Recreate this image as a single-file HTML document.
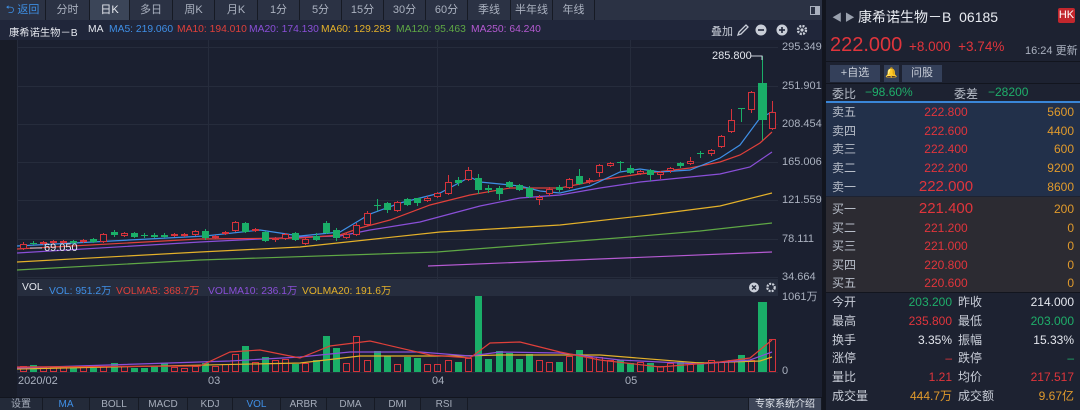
<!DOCTYPE html>
<html><head><meta charset="utf-8"><style>
*{margin:0;padding:0;box-sizing:border-box}
body{width:1080px;height:410px;overflow:hidden;background:#1b2030;font-family:"Liberation Sans","Noto Sans CJK SC",sans-serif;font-size:11px;color:#c9ced8;position:relative}
.a{position:absolute;white-space:nowrap}
.m{font-size:10.3px}
.tb{position:absolute;top:0;height:20px;background:#2b3244;border-right:1px solid #161a24;color:#aab1bf;font-size:11px;line-height:20px;text-align:center}
.bt{position:absolute;top:398px;height:12px;background:#232a39;border-right:1px solid #161a24;color:#a5acba;font-size:10px;line-height:14px;text-align:center;overflow:hidden}
.r{color:#e0353c}.g{color:#1fae6a}.o{color:#e09a2c}.w{color:#e4e7ee}
.row{position:absolute;left:826px;width:254px;height:18px;line-height:18px;font-size:12px}
.row .l{position:absolute;left:6px;color:#b8bec9}
.row .p{position:absolute;left:60px;width:120px;text-align:center}
.row .v{position:absolute;right:6px}
.st{position:absolute;left:826px;width:254px;height:19px;line-height:19px;font-size:12px}
.st span{position:absolute}
</style></head><body>
<div class="tb" style="left:0;width:46px;color:#3d8de0">⮌ 返回</div>
<div class="tb" style="left:46px;width:44px">分时</div>
<div class="tb" style="left:90px;width:40px;background:#3b4558;color:#e6e9ef">日K</div>
<div class="tb" style="left:130px;width:43px">多日</div>
<div class="tb" style="left:173px;width:42px">周K</div>
<div class="tb" style="left:215px;width:43px">月K</div>
<div class="tb" style="left:258px;width:42px">1分</div>
<div class="tb" style="left:300px;width:42px">5分</div>
<div class="tb" style="left:342px;width:42px">15分</div>
<div class="tb" style="left:384px;width:42px">30分</div>
<div class="tb" style="left:426px;width:42px">60分</div>
<div class="tb" style="left:468px;width:43px">季线</div>
<div class="tb" style="left:511px;width:42px">半年线</div>
<div class="tb" style="left:553px;width:42px">年线</div>
<div class="a" style="left:595px;top:0;width:227px;height:20px;background:#2b3244"></div>
<div class="a" style="left:810px;top:6px;width:10px;height:9px;border:1px solid #aab1bf"><div style="position:absolute;right:0;top:0;width:4px;height:7px;background:#aab1bf"></div></div>
<div class="a" style="left:0;top:20px;width:822px;height:20px;background:#20263a"></div>
<div class="a m" style="left:9px;top:24px;color:#e4e7ee">康希诺生物－B</div>
<div class="a m" style="left:88px;top:24px;color:#e4e7ee">MA</div>
<div class="a m" style="left:109px;top:24px;color:#3f8fe6">MA5: 219.060</div>
<div class="a m" style="left:177px;top:24px;color:#e0403a">MA10: 194.010</div>
<div class="a m" style="left:249px;top:24px;color:#8a4fd8">MA20: 174.130</div>
<div class="a m" style="left:321px;top:24px;color:#e4b12a">MA60: 129.283</div>
<div class="a m" style="left:396px;top:24px;color:#5fa845">MA120: 95.463</div>
<div class="a m" style="left:471px;top:24px;color:#b55ad2">MA250: 64.240</div>
<div class="a" style="left:711px;top:23px;color:#c9ced8">叠加</div>
<svg class="a" style="left:735px;top:22px" width="90" height="16" viewBox="0 0 90 16">
<path d="M3 13 L4 10 L11 3 L13 5 L6 12 Z" fill="none" stroke="#c9ced8" stroke-width="1.3"/>
<circle cx="26" cy="8" r="5.5" fill="#c9ced8"/><rect x="23" y="7.2" width="6" height="1.6" fill="#20263a"/>
<circle cx="47" cy="8" r="5.5" fill="#c9ced8"/><rect x="44" y="7.2" width="6" height="1.6" fill="#20263a"/><rect x="46.2" y="5" width="1.6" height="6" fill="#20263a"/>
<circle cx="67" cy="8" r="4" fill="none" stroke="#c9ced8" stroke-width="2.4" stroke-dasharray="2 1.2"/><circle cx="67" cy="8" r="1.6" fill="#c9ced8"/>
</svg>
<svg id="ch" class="a" style="left:0;top:0" width="822" height="410" viewBox="0 0 822 410"></svg>
<div class="a" style="left:782px;top:41px;color:#aab1bf">295.349</div>
<div class="a" style="left:782px;top:80px;color:#aab1bf">251.901</div>
<div class="a" style="left:782px;top:118px;color:#aab1bf">208.454</div>
<div class="a" style="left:782px;top:156px;color:#aab1bf">165.006</div>
<div class="a" style="left:782px;top:194px;color:#aab1bf">121.559</div>
<div class="a" style="left:782px;top:233px;color:#aab1bf">78.111</div>
<div class="a" style="left:782px;top:271px;color:#aab1bf">34.664</div>
<div class="a" style="left:782px;top:288px;color:#aab1bf">1061万</div>
<div class="a" style="left:782px;top:365px;color:#aab1bf">0</div>
<div class="a" style="left:712px;top:50px;color:#e4e7ee">285.800</div>
<div class="a" style="left:44px;top:242px;color:#e4e7ee">69.050</div>
<div class="a" style="left:17px;top:279px;width:761px;height:17px;background:#262d3e"></div>
<div class="a m" style="left:22px;top:282px;color:#e4e7ee">VOL</div>
<div class="a m" style="left:49px;top:282px;color:#3f8fe6">VOL: 951.2万</div>
<div class="a m" style="left:116px;top:282px;color:#e0403a">VOLMA5: 368.7万</div>
<div class="a m" style="left:208px;top:282px;color:#8a4fd8">VOLMA10: 236.1万</div>
<div class="a m" style="left:302px;top:282px;color:#e4b12a">VOLMA20: 191.6万</div>
<svg class="a" style="left:748px;top:281px" width="30" height="13"><circle cx="6" cy="6.5" r="5" fill="#c9ced8"/><path d="M4 4.5 L8 8.5 M8 4.5 L4 8.5" stroke="#262d3e" stroke-width="1.4"/><circle cx="23" cy="6.5" r="3.7" fill="none" stroke="#c9ced8" stroke-width="2.2" stroke-dasharray="2 1.1"/></svg>
<div class="a" style="left:18px;top:375px;color:#aab1bf">2020/02</div>
<div class="a" style="left:208px;top:375px;color:#aab1bf">03</div>
<div class="a" style="left:432px;top:375px;color:#aab1bf">04</div>
<div class="a" style="left:625px;top:375px;color:#aab1bf">05</div>
<div class="a" style="left:0;top:397px;width:822px;height:1px;background:#12151e"></div>
<div class="bt" style="left:0;width:43px">设置</div>
<div class="bt" style="left:43px;width:47px;color:#3f8fe6">MA</div>
<div class="bt" style="left:90px;width:49px">BOLL</div>
<div class="bt" style="left:139px;width:49px">MACD</div>
<div class="bt" style="left:188px;width:45px">KDJ</div>
<div class="bt" style="left:233px;width:48px;color:#3f8fe6">VOL</div>
<div class="bt" style="left:281px;width:46px">ARBR</div>
<div class="bt" style="left:327px;width:48px">DMA</div>
<div class="bt" style="left:375px;width:46px">DMI</div>
<div class="bt" style="left:421px;width:47px">RSI</div>
<div class="bt" style="left:468px;width:281px"></div>
<div class="bt" style="left:749px;width:73px;background:#3d4558;color:#dfe3ea">专家系统介绍</div>
<div class="a" style="left:822px;top:0;width:4px;height:410px;background:#12151e"></div>
<div class="a" style="left:826px;top:0;width:254px;height:410px;background:#1d2231"></div>
<div class="a" style="left:832px;top:9px;color:#9aa1ae;font-size:10px">◀ ▶</div>
<div class="a" style="left:858px;top:7px;font-size:14px;color:#e8ebf1">康希诺生物－B&nbsp; 06185</div>
<div class="a" style="left:1058px;top:8px;width:17px;height:15px;background:#c2272d;color:#fff;font-size:11px;line-height:15px;text-align:center;border-radius:2px">HK</div>
<div class="a r" style="left:830px;top:34px;font-size:20px">222.000</div>
<div class="a r" style="left:909px;top:39px;font-size:13.5px">+8.000&nbsp; +3.74%</div>
<div class="a" style="left:1025px;top:42px;font-size:11px;color:#aab1bf">16:24 更新</div>
<div class="a" style="left:826px;top:61px;width:254px;height:1px;background:#12151e"></div>
<div class="a" style="left:830px;top:65px;width:50px;height:17px;background:#34405a;color:#c9ced8;text-align:center;line-height:17px">+自选</div>
<div class="a" style="left:884px;top:65px;width:15px;height:17px;background:#34405a;color:#c9ced8;text-align:center;line-height:17px;font-size:10px">🔔</div>
<div class="a" style="left:902px;top:65px;width:40px;height:17px;background:#34405a;color:#c9ced8;text-align:center;line-height:17px">问股</div>
<div class="a" style="left:826px;top:83px;width:254px;height:1px;background:#12151e"></div>
<div class="a" style="left:832px;top:85px;font-size:12px;color:#b8bec9">委比</div>
<div class="a g" style="left:865px;top:85px;font-size:12px">−98.60%</div>
<div class="a" style="left:954px;top:85px;font-size:12px;color:#b8bec9">委差</div>
<div class="a g" style="left:988px;top:85px;font-size:12px">−28200</div>
<div class="a" style="left:826px;top:101px;width:254px;height:2px;background:#3a86d8"></div>
<div class="a" style="left:826px;top:103px;width:254px;height:93px;background:#22304a"></div>
<div class="a" style="left:826px;top:197px;width:254px;height:95px;background:#2c2b32"></div>
<div class="row" style="top:103px"><span class="l">卖五</span><span class="p r">222.800</span><span class="v o">5600</span></div>
<div class="row" style="top:122px"><span class="l">卖四</span><span class="p r">222.600</span><span class="v o">4400</span></div>
<div class="row" style="top:140px"><span class="l">卖三</span><span class="p r">222.400</span><span class="v o">600</span></div>
<div class="row" style="top:159px"><span class="l">卖二</span><span class="p r">222.200</span><span class="v o">9200</span></div>
<div class="row" style="top:178px"><span class="l">卖一</span><span class="p r" style="font-size:15px">222.000</span><span class="v o">8600</span></div>
<div class="row" style="top:200px"><span class="l">买一</span><span class="p r" style="font-size:15px">221.400</span><span class="v o">200</span></div>
<div class="row" style="top:219px"><span class="l">买二</span><span class="p r">221.200</span><span class="v o">0</span></div>
<div class="row" style="top:237px"><span class="l">买三</span><span class="p r">221.000</span><span class="v o">0</span></div>
<div class="row" style="top:256px"><span class="l">买四</span><span class="p r">220.800</span><span class="v o">0</span></div>
<div class="row" style="top:274px"><span class="l">买五</span><span class="p r">220.600</span><span class="v o">0</span></div>
<div class="a" style="left:826px;top:292px;width:254px;height:1px;background:#12151e"></div>
<div class="st" style="top:293px"><span style="left:6px">今开</span><span class="g" style="right:128px">203.200</span><span style="left:132px">昨收</span><span class="w" style="right:6px">214.000</span></div>
<div class="st" style="top:312px"><span style="left:6px">最高</span><span class="r" style="right:128px">235.800</span><span style="left:132px">最低</span><span class="g" style="right:6px">203.000</span></div>
<div class="st" style="top:331px"><span style="left:6px">换手</span><span class="w" style="right:128px">3.35%</span><span style="left:132px">振幅</span><span class="w" style="right:6px">15.33%</span></div>
<div class="st" style="top:349px"><span style="left:6px">涨停</span><span class="r" style="right:128px">–</span><span style="left:132px">跌停</span><span class="g" style="right:6px">–</span></div>
<div class="st" style="top:368px"><span style="left:6px">量比</span><span class="r" style="right:128px">1.21</span><span style="left:132px">均价</span><span class="r" style="right:6px">217.517</span></div>
<div class="st" style="top:387px"><span style="left:6px">成交量</span><span class="o" style="right:128px">444.7万</span><span style="left:132px">成交额</span><span class="o" style="right:6px">9.67亿</span></div>
<script>
var s='';
s+='<rect x="0" y="40" width="17" height="357" fill="#181c28"/>';
[47,86,124,162,200,239,277].forEach(function(y){s+='<line x1="17" y1="'+(y+0.5)+'" x2="778" y2="'+(y+0.5)+'" stroke="#262c3c"/>';});
[208,437,630].forEach(function(x){s+='<line x1="'+(x+0.5)+'" y1="40" x2="'+(x+0.5)+'" y2="372" stroke="#262c3c"/>';});
s+='<line x1="17.5" y1="40" x2="17.5" y2="372" stroke="#262c3c"/>';
s+='<line x1="17" y1="372.5" x2="778" y2="372.5" stroke="#262c3c"/>';
function pl(p,c){s+='<polyline fill="none" stroke="'+c+'" stroke-width="1.2" points="'+p+'"/>';}
pl('17,270 200,260 437,252 630,237 700,231 772,223','#5fa845');
pl('428,266 772,252','#b55ad2');
pl('17,262 200,252 300,247 440,232 560,225 650,215 720,206 772,193','#e4b12a');
pl('17,253 200,242 300,237 340,236 370,230 420,222 480,206 520,198 560,195 600,188 640,182 680,178 720,174 750,167 772,152','#8a4fd8');
pl('17,249 200,239 300,238 340,235 360,228 390,220 430,205 470,195 510,188 560,188 600,180 640,174 690,168 720,162 740,155 760,143 772,132','#e0403a');
pl('17,246 205,236 260,230 300,236 340,232 370,214 400,203 440,193 470,177 480,182 520,186 540,191 560,193 590,186 620,172 640,169 660,172 690,170 720,158 740,145 760,118 772,112','#3f8fe6');
var C=[[23,'r',244,249,242,250,6],[33,'g',243,244,241,245,7],[43,'r',242,244,241,245,5],[53,'r',241,243,240,245,5],[63,'r',241,243,240,244,5],[73,'g',241,243,240,244,4],[83,'r',240,242,239,243,5],[93,'g',239,242,238,243,4],[103,'r',234,242,233,243,6],[114,'g',232,235,230,237,9],[124,'r',233,236,232,237,6],[134,'g',233,237,232,238,4],[144,'g',235,236,233,238,4],[154,'g',235,237,233,238,6],[164,'g',235,237,233,238,9],[174,'r',234,236,233,237,5],[184,'r',234,236,233,237,4],[195,'r',231,235,230,236,6],[205,'g',231,238,229,240,9],[215,'r',236,238,235,239,6],[225,'r',232,234,231,235,8],[235,'r',222,231,221,232,18],[245,'g',223,232,222,233,26],[255,'r',229,231,228,232,10],[265,'g',232,241,231,242,15],[275,'r',238,240,237,242,12],[285,'r',234,239,233,240,13],[295,'g',233,240,232,241,8],[305,'r',239,244,238,245,9],[316,'g',236,240,233,241,12],[326,'g',223,233,221,234,36],[336,'g',230,238,228,241,24],[346,'r',234,238,233,239,9],[356,'r',225,235,223,236,36],[367,'r',213,225,211,226,12],[377,'g',205,206,199,211,21],[387,'g',203,210,202,213,16],[397,'r',202,211,201,212,8],[407,'g',199,205,198,206,15],[417,'g',198,203,198,206,14],[427,'r',198,201,196,202,8],[437,'r',193,197,192,198,8],[448,'r',182,194,175,195,12],[458,'g',180,183,177,186,10],[468,'r',170,180,167,181,14],[478,'g',178,190,174,194,77],[488,'g',188,190,185,193,13],[499,'g',188,194,186,200,21],[509,'g',182,187,181,188,19],[519,'g',185,190,184,191,13],[529,'g',188,197,186,198,18],[539,'r',197,200,195,205,12],[549,'r',189,194,187,196,10],[559,'g',187,190,185,192,10],[569,'r',179,188,178,189,16],[579,'g',176,184,169,185,22],[589,'r',180,182,178,184,15],[599,'r',165,173,164,177,15],[610,'r',163,166,162,167,12],[620,'g',162,163,161,171,12],[630,'g',168,173,165,174,9],[640,'r',171,174,170,175,10],[650,'g',170,175,169,181,9],[660,'r',172,175,171,179,6],[670,'r',168,171,167,173,9],[680,'g',163,166,162,168,10],[690,'r',161,164,157,165,8],[700,'g',153,154,151,158,10],[711,'r',150,154,149,156,12],[721,'r',136,147,135,148,10],[731,'r',120,132,109,133,12],[741,'g',108,109,108,122,17],[751,'r',92,110,91,113,12],[762,'g',83,120,56,140,70],[772,'r',112,129,101,130,33]];
C.forEach(function(c){var x=c[0],col=c[1]=='r'?'#d6333b':'#1aae68',w=(x==762?9:7);
s+='<line x1="'+(x+0.5)+'" y1="'+c[4]+'" x2="'+(x+0.5)+'" y2="'+c[5]+'" stroke="'+col+'"/>';
var h=Math.max(c[3]-c[2],1);
if(c[1]=='r'){s+='<rect x="'+(x-w/2+1)+'" y="'+(c[2]+0.5)+'" width="'+(w-1)+'" height="'+Math.max(h-1,1)+'" fill="#1b2030" stroke="'+col+'"/>';
s+='<rect x="'+(x-w/2+1)+'" y="'+(372-c[6]+0.5)+'" width="'+(w-1)+'" height="'+(c[6]-1)+'" fill="none" stroke="'+col+'"/>';}
else{s+='<rect x="'+(x-w/2+0.5)+'" y="'+c[2]+'" width="'+w+'" height="'+h+'" fill="'+col+'"/>';
s+='<rect x="'+(x-w/2+0.5)+'" y="'+(372-c[6])+'" width="'+w+'" height="'+c[6]+'" fill="'+col+'"/>';}
});
s+='<polyline fill="none" stroke="#c9ced8" points="751,56 762,56 762,60"/>';
s+='<line x1="30" y1="248" x2="42" y2="248" stroke="#c9ced8"/>';
pl('17,369 300,363 360,356 460,356 500,355 600,355 700,363 760,361 772,357','#e4b12a');
pl('17,368 230,361 300,357 350,352 420,352 470,356 500,352 560,353 620,360 700,364 750,360 772,352','#8a4fd8');
pl('17,367 200,366 230,352 260,350 300,358 330,346 370,341 430,355 470,358 490,343 520,342 560,352 600,360 660,367 720,362 750,358 772,340','#e0403a');
document.getElementById('ch').innerHTML=s;
</script>
</body></html>
